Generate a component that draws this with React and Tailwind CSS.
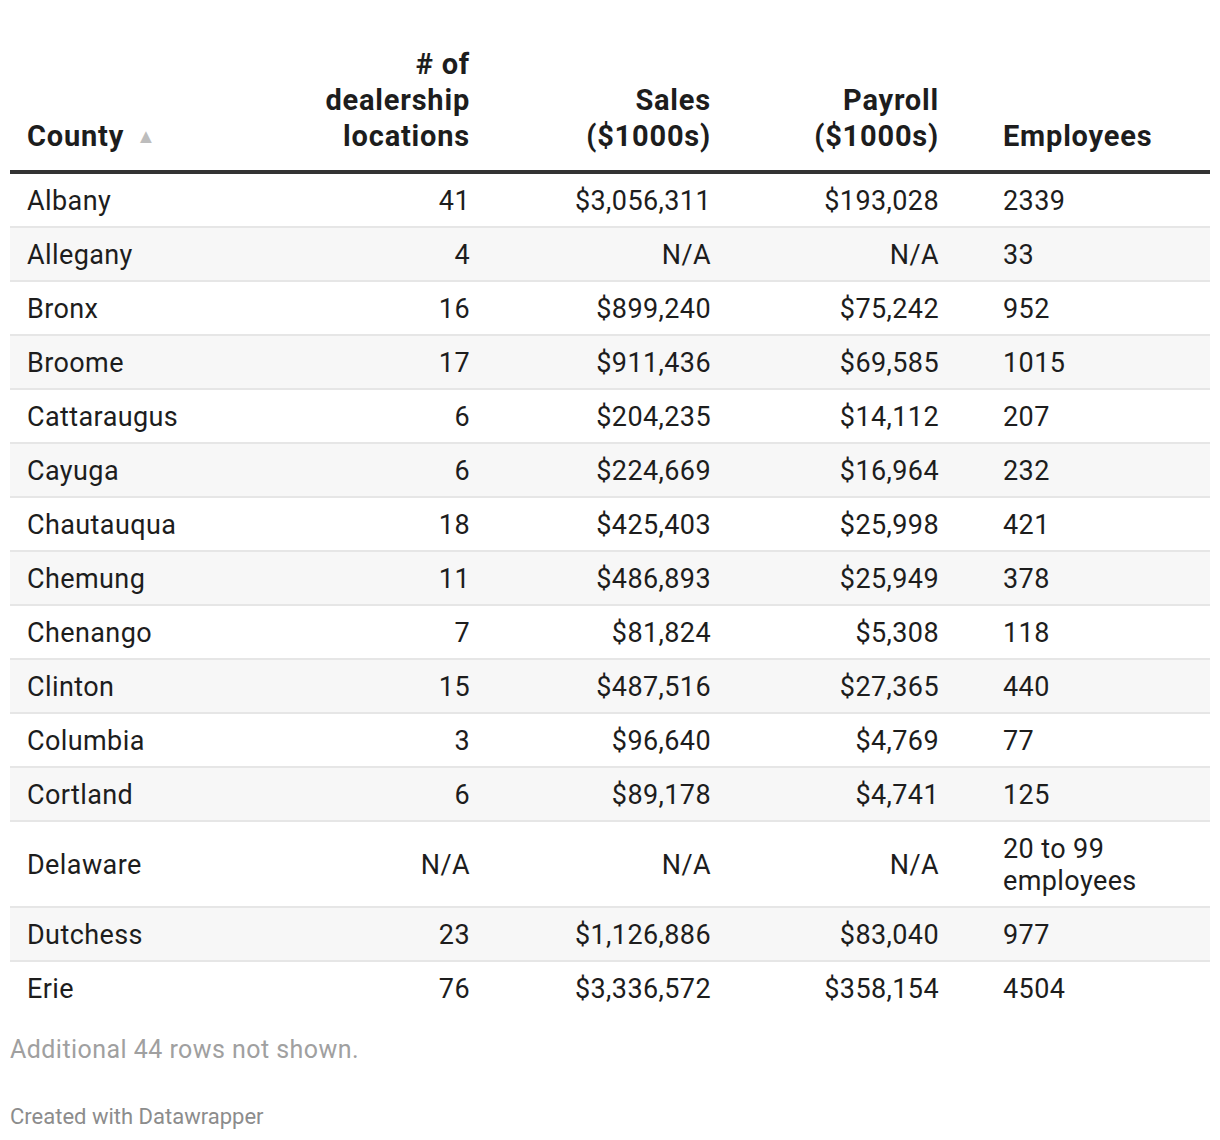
import React from "react";

const rows = [
  ["Albany", "41", "$3,056,311", "$193,028", "2339"],
  ["Allegany", "4", "N/A", "N/A", "33"],
  ["Bronx", "16", "$899,240", "$75,242", "952"],
  ["Broome", "17", "$911,436", "$69,585", "1015"],
  ["Cattaraugus", "6", "$204,235", "$14,112", "207"],
  ["Cayuga", "6", "$224,669", "$16,964", "232"],
  ["Chautauqua", "18", "$425,403", "$25,998", "421"],
  ["Chemung", "11", "$486,893", "$25,949", "378"],
  ["Chenango", "7", "$81,824", "$5,308", "118"],
  ["Clinton", "15", "$487,516", "$27,365", "440"],
  ["Columbia", "3", "$96,640", "$4,769", "77"],
  ["Cortland", "6", "$89,178", "$4,741", "125"],
  ["Delaware", "N/A", "N/A", "N/A", "20 to 99 employees"],
  ["Dutchess", "23", "$1,126,886", "$83,040", "977"],
  ["Erie", "76", "$3,336,572", "$358,154", "4504"],
];

export default function App() {
  return (
    <div
      className="w-[1220px] bg-white px-[10px] text-[#1d1d1d]"
      style={{ fontFamily: "Roboto, 'Liberation Sans', sans-serif" }}
    >
      <div className="grid grid-cols-[290px_185px_241px_228px_256px] items-end border-b-[4px] border-[#333333] pt-[46px] pb-[16px] text-[29px] font-bold leading-[36px] tracking-[0.8px]">
        <div className="pl-[17px] flex items-center gap-[12px]">
          <span>County</span>
          <span className="text-[20px] text-[#bdbdbd] leading-none">▲</span>
        </div>
        <div className="pr-[15px] text-right">
          # of
          <br />
          dealership
          <br />
          locations
        </div>
        <div className="pr-[15px] text-right">
          Sales
          <br />
          ($1000s)
        </div>
        <div className="pr-[15px] text-right">
          Payroll
          <br />
          ($1000s)
        </div>
        <div className="pl-[49px]">Employees</div>
      </div>
      <div>
        {rows.map((r, i) => (
          <div
            key={r[0]}
            className={
              "grid grid-cols-[290px_185px_241px_228px_256px] items-center pt-[11px] pb-[9px] text-[27px] leading-[32px] tracking-[0.4px] " +
              (i % 2 === 1 ? "bg-[#f7f7f7] " : "bg-white ") +
              (i === rows.length - 1 ? "" : "border-b-2 border-[#e6e6e6]")
            }
          >
            <div className="pl-[17px]">{r[0]}</div>
            <div className="pr-[15px] text-right">{r[1]}</div>
            <div className="pr-[15px] text-right">{r[2]}</div>
            <div className="pr-[15px] text-right">{r[3]}</div>
            <div className="pl-[49px] pr-[40px]">{r[4]}</div>
          </div>
        ))}
      </div>
      <div className="pt-[21px] text-[25px] leading-[30px] tracking-[0.45px] text-[#a0a0a0]">
        Additional 44 rows not shown.
      </div>
      <div className="pt-[39px] pb-[10px] text-[22px] leading-[26px] text-[#8c8c8c]">
        Created with Datawrapper
      </div>
    </div>
  );
}
